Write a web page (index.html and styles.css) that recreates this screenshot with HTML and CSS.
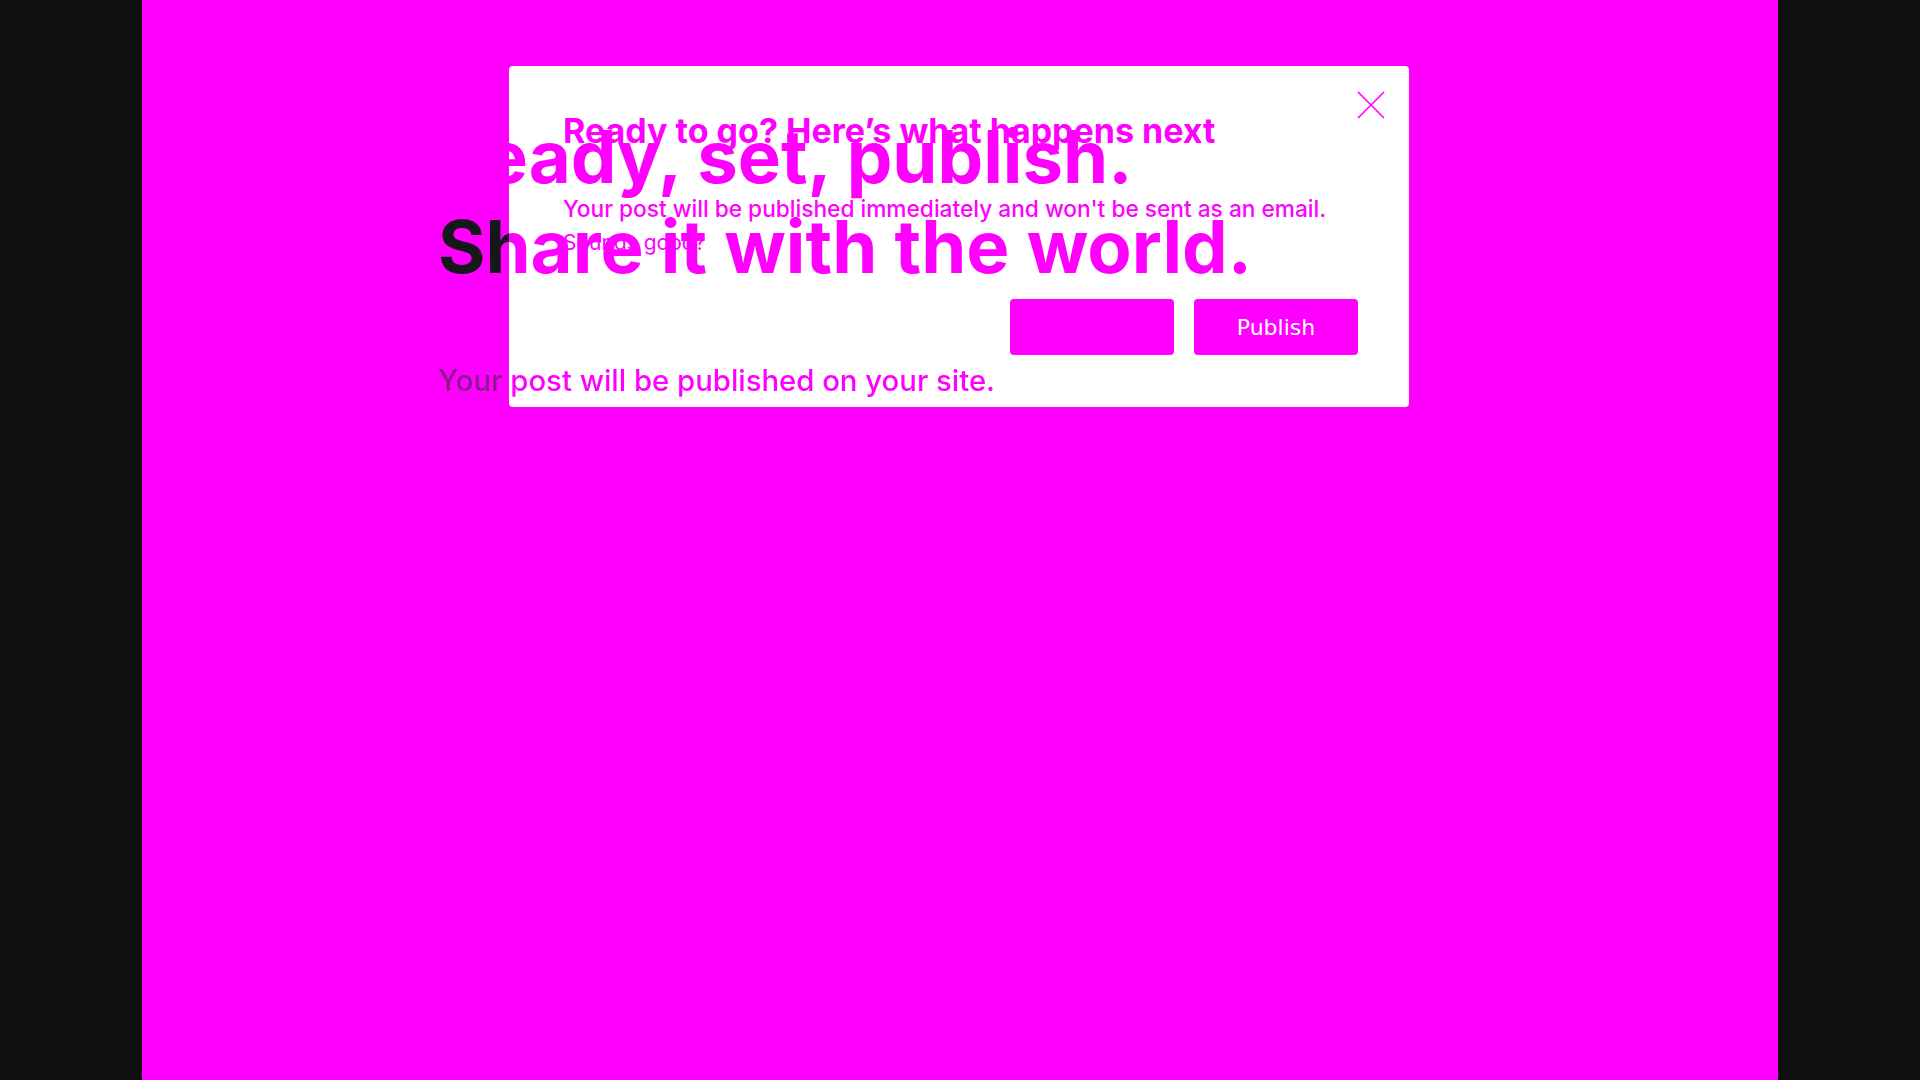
FILE: index.html
```html
<!DOCTYPE html>
<html lang="en">
<head>
<meta charset="utf-8">
<title>Publish</title>
<link rel="stylesheet" href="styles.css">
</head>
<body>
<div class="side"></div>
<main class="stage">
  <div class="content">
    <h1 class="hero">
      <span class="hero-line">Ready, set, publish.</span>
      <span class="hero-line hero-line-dark">Share it with the world.</span>
    </h1>
    <p class="hero-sub">Your post will be published on your site.</p>
  </div>
</main>
<div class="side"></div>

<div class="modal">
  <button class="modal-close" aria-label="Close">
    <svg width="28" height="28" viewBox="0 0 28 28"><path d="M1 1 L27 27 M27 1 L1 27" stroke="#ff00ff" stroke-width="1.6" fill="none"/></svg>
  </button>
  <h2 class="modal-title">Ready to go? Here’s what happens next</h2>
  <p class="modal-text">Your post will be published immediately and won't be sent as an email.</p>
  <p class="modal-note">Sounds good?</p>
  <div class="modal-actions">
    <button class="btn btn-cancel">Cancel</button>
    <button class="btn btn-publish">Publish</button>
  </div>
</div>
</body>
</html>
```
FILE: styles.css
```css
html, body {
  margin: 0;
  padding: 0;
  height: 100%;
}
body {
  background: #101010;
  display: grid;
  grid-template-columns: 142px 1fr 142px;
  height: 100vh;
  overflow: hidden;
  font-family: Inter, "Noto Sans", sans-serif;
}
.side {
  background: #101010;
}
.stage {
  background: #ff00ff;
  padding: 112px 0 0 296px;
}
.content {
  position: relative;
  z-index: 2;
  width: 1000px;
}
.hero {
  margin: 0;
  font-size: 72.5px;
  line-height: 90px;
  font-weight: 700;
  letter-spacing: 0;
  color: #ff00ff;
}
.hero-line {
  display: block;
  color: #ff00ff;
}
.hero-line-dark {
  background: linear-gradient(to right, #15171a 71px, #ff00ff 71px);
  -webkit-background-clip: text;
  background-clip: text;
  color: transparent;
}
.hero-sub {
  margin: 69px 0 0;
  font-size: 29.3px;
  line-height: 39px;
  font-weight: 500;
  letter-spacing: 0;
  background: linear-gradient(to right, #8a1a8c 71px, #ff00ff 71px);
  -webkit-background-clip: text;
  background-clip: text;
  color: transparent;
}

.modal {
  position: fixed;
  left: 509px;
  top: 66px;
  width: 900px;
  height: 341px;
  box-sizing: border-box;
  padding: 45px 51px 52px 54px;
  background: #ffffff;
  border-radius: 4px;
  z-index: 1;
  display: flex;
  flex-direction: column;
}
.modal-close {
  position: absolute;
  right: 24px;
  top: 25px;
  width: 28px;
  height: 28px;
  padding: 0;
  border: 0;
  background: transparent;
}
.modal-close svg {
  display: block;
}
.modal-title {
  margin: 0;
  font-size: 34px;
  line-height: 40px;
  font-weight: 700;
  letter-spacing: 0;
  color: #ff00ff;
}
.modal-text {
  margin: 43px 0 0;
  font-size: 22.7px;
  line-height: 30px;
  font-weight: 500;
  color: #ff00ff;
}
.modal-note {
  margin: 6px 0 0;
  font-size: 21px;
  line-height: 26px;
  font-weight: 400;
  color: #ff00ff;
}
.modal-actions {
  margin-top: 43px;
  display: flex;
  justify-content: flex-end;
  gap: 20px;
}
.btn {
  width: 164px;
  height: 56px;
  border: 0;
  border-radius: 4px;
  background: #ff00ff;
  font-family: "DejaVu Sans", sans-serif;
  font-size: 22px;
  color: #ffffff;
}
.btn-cancel {
  color: #ff00ff;
}
```
